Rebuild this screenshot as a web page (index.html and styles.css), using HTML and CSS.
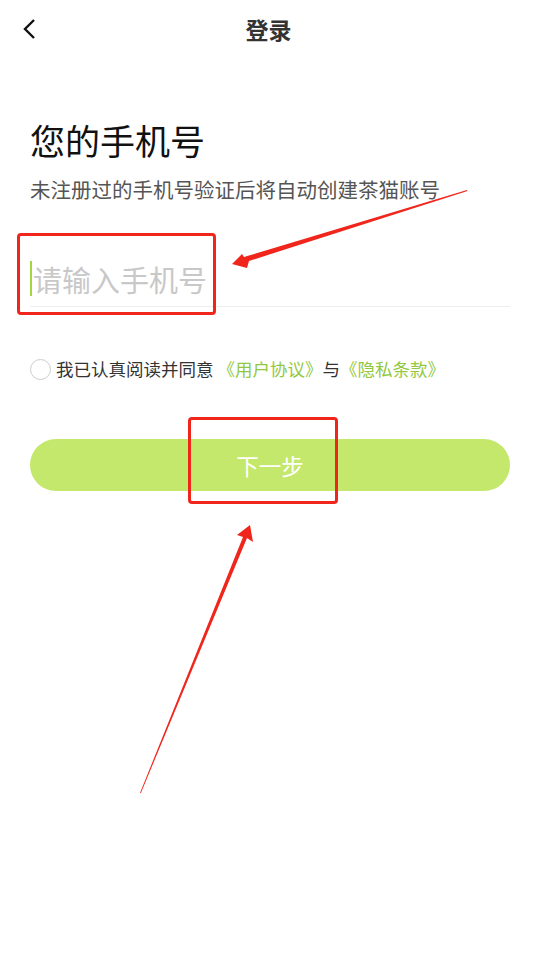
FILE: index.html
```html
<!DOCTYPE html>
<html lang="zh-CN">

<head>
    <meta charset="UTF-8">
    <meta name="viewport" content="width=device-width, initial-scale=1.0">
    <title>登录</title>
    <link rel="stylesheet" href="styles.css">
</head>

<body>
    <div class="page">
        <header class="topbar">
            <div class="back">
                <svg width="14" height="22" viewBox="0 0 14 22">
                    <polyline points="11,2 2,11 11,20" fill="none" stroke="#111" stroke-width="2.4" />
                </svg>
            </div>
            <h2 class="title">登录</h2>
            <div class="back"></div>
        </header>

        <main class="login">
            <h1 class="heading">您的手机号</h1>
            <p class="tip">未注册过的手机号验证后将自动创建茶猫账号</p>

            <div class="phone">
                <span class="caret"></span>
                <span class="placeholder">请输入手机号</span>
            </div>

            <div class="agree">
                <span class="radio"></span>
                <span>我已认真阅读并同意 <a class="link">《用户协议》</a>与<a class="link">《隐私条款》</a></span>
            </div>

            <button class="next">下一步</button>
        </main>

        <!-- annotations drawn over the screenshot -->
        <div class="mark mark-input"></div>
        <div class="mark mark-btn"></div>
        <svg class="arrows" width="545" height="956" viewBox="0 0 545 956">
            <polygon points="467,190 467.5,191 249,261 247,268 232,264 242,254 244,257" fill="#f0261c" />
            <polygon points="140,793 140.8,793.2 247,538 253,542 250,525 237,535 243,537" fill="#f0261c" />
        </svg>
    </div>
</body>

</html>
```

FILE: styles.css
```css
* {
    margin: 0;
    padding: 0;
    box-sizing: border-box;
}

body {
    font-family: "Noto Sans CJK SC", "Noto Sans", sans-serif;
    background-color: #fff;
    color: #111;
}

.page {
    position: relative;
    width: 545px;
    min-height: 956px;
}

.topbar {
    display: grid;
    grid-template-columns: 60px 1fr 68px;
    align-items: center;
    height: 58px;
}

.back {
    display: flex;
    align-items: center;
    padding-left: 23px;
}

.title {
    text-align: center;
    font-size: 23px;
    font-weight: bold;
    color: #333;
    line-height: 58px;
}

.login {
    padding: 0 35px 0 30px;
}

.heading {
    margin-top: 58px;
    font-size: 35px;
    font-weight: normal;
    line-height: 48px;
    color: #111;
}

.tip {
    margin-top: 11px;
    font-size: 20.5px;
    line-height: 28px;
    color: #555;
}

.phone {
    display: flex;
    align-items: center;
    margin-top: 56px;
    height: 48px;
    padding-bottom: 8px;
    border-bottom: 1px solid #eee;
}

.caret {
    width: 2px;
    height: 35px;
    background-color: #a6d63e;
}

.placeholder {
    margin-left: 1px;
    font-size: 29px;
    line-height: 40px;
    color: #c8c8c8;
}

.agree {
    display: flex;
    align-items: center;
    gap: 5px;
    margin-top: 50px;
    font-size: 17.5px;
    line-height: 24px;
    color: #333;
}

.radio {
    width: 21px;
    height: 21px;
    border: 1px solid #ccc;
    border-radius: 50%;
}

.link {
    color: #92c83e;
}

.next {
    display: block;
    width: 100%;
    height: 52px;
    margin-top: 58px;
    border: none;
    border-radius: 26px;
    background-color: #c3e86b;
    color: #fff;
    font-family: "Noto Sans CJK SC", sans-serif;
    font-size: 22.5px;
}

.mark {
    position: absolute;
    border: 3px solid #f0261c;
    border-radius: 4px;
}

.mark-input {
    left: 17px;
    top: 233px;
    width: 199px;
    height: 82px;
}

.mark-btn {
    left: 188px;
    top: 417px;
    width: 150px;
    height: 87px;
}

.arrows {
    position: absolute;
    left: 0;
    top: 0;
    pointer-events: none;
}
```
